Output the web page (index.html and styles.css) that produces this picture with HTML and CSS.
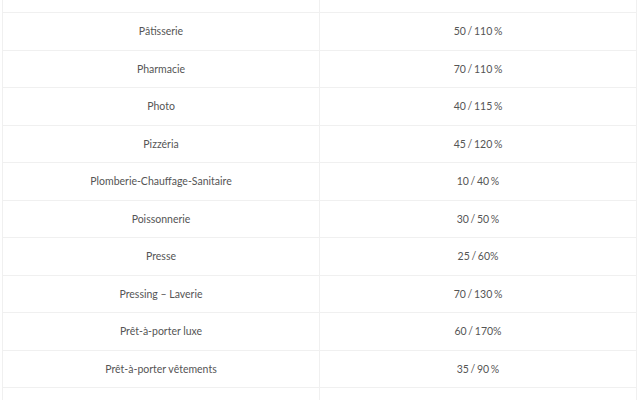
FILE: index.html
```html
<!DOCTYPE html>
<html lang="fr">
<head>
<meta charset="utf-8">
<link rel="stylesheet" href="styles.css">
</head>
<body>
<table class="rates">
<tbody>
<tr class="cut"><td></td><td></td></tr>
<tr><td>Pâtisserie</td><td class="val">50 / 110 %</td></tr>
<tr><td>Pharmacie</td><td class="val">70 / 110 %</td></tr>
<tr><td>Photo</td><td class="val">40 / 115 %</td></tr>
<tr><td>Pizzéria</td><td class="val">45 / 120 %</td></tr>
<tr><td>Plomberie-Chauffage-Sanitaire</td><td class="val">10 / 40 %</td></tr>
<tr><td>Poissonnerie</td><td class="val">30 / 50 %</td></tr>
<tr><td>Presse</td><td class="val">25 / 60%</td></tr>
<tr><td>Pressing – Laverie</td><td class="val">70 / 130 %</td></tr>
<tr><td>Prêt-à-porter luxe</td><td class="val">60 / 170%</td></tr>
<tr><td>Prêt-à-porter vêtements</td><td class="val">35 / 90 %</td></tr>
<tr><td>&nbsp;</td><td class="val">&nbsp;</td></tr>
</tbody>
</table>
</body>
</html>
```
FILE: styles.css
```css
html, body {
  margin: 0;
  padding: 0;
  background: #fff;
  overflow: hidden;
}
.rates {
  margin-left: 2px;
  width: 635px;
  border-collapse: collapse;
  table-layout: fixed;
  font-family: Lato, "Liberation Sans", sans-serif;
  font-size: 10.5px;
  color: #555;
}
.rates td {
  border: 1px solid #f0f0f0;
  text-align: center;
  height: 36.5px;
  padding: 0;
  vertical-align: middle;
}
.rates td.val {
  word-spacing: -1px;
}
.rates tr.cut td {
  height: 12px;
  border-top: none;
}
```
